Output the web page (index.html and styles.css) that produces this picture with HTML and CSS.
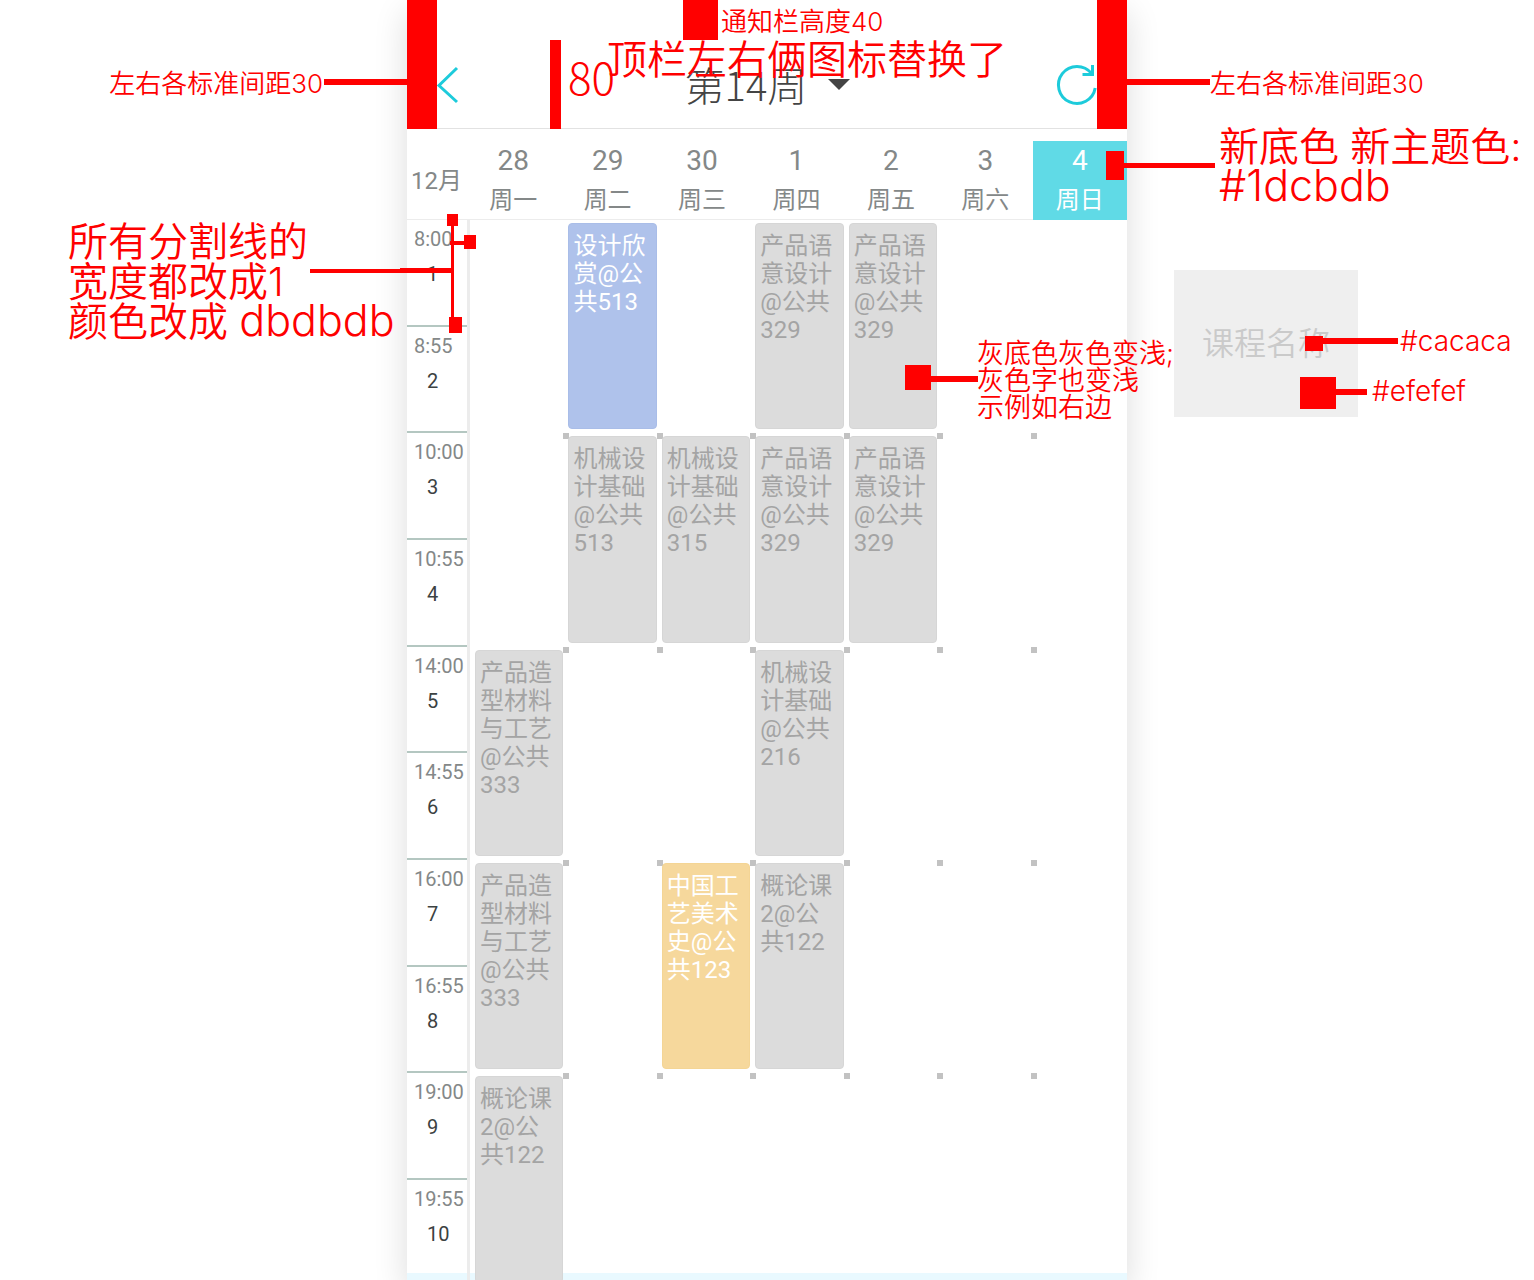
FILE: index.html
```html
<!DOCTYPE html>
<html lang="zh-CN">
<head>
<meta charset="utf-8">
<meta name="viewport" content="width=device-width, initial-scale=1">
<title>课程表</title>
<link rel="stylesheet" href="styles.css">
</head>
<body>
<main class="phone">
  <header class="topbar">
    <button class="icon-button" type="button" aria-label="返回">
      <svg width="22" height="38" viewBox="0 0 22 38"><path d="M20 2 2 19.500 20 36"/></svg>
    </button>
    <div class="week">
      <select class="week-select" aria-label="选择周次"><option>第14周</option></select>
      <svg class="week-arrow" width="22" height="11" viewBox="0 0 22 11"><path d="M0 0h22L11 11z"/></svg>
    </div>
    <button class="icon-button" type="button" aria-label="刷新">
      <svg width="40" height="42" viewBox="0 0 40 42"><path d="M38.200 24A18.500 18.500 0 1 1 34.500 9.500M35.500 1v9.500H25.500"/></svg>
    </button>
  </header>

  <div class="days">
    <div class="month">12月</div>
    <div class="day"><span class="date">28</span><span>周一</span></div>
    <div class="day"><span class="date">29</span><span>周二</span></div>
    <div class="day"><span class="date">30</span><span>周三</span></div>
    <div class="day"><span class="date">1</span><span>周四</span></div>
    <div class="day"><span class="date">2</span><span>周五</span></div>
    <div class="day"><span class="date">3</span><span>周六</span></div>
    <div class="day today"><span class="date">4</span><span>周日</span></div>
  </div>

  <div class="schedule">
    <ol class="periods">
      <li><time>8:00</time><b>1</b></li>
      <li><time>8:55</time><b>2</b></li>
      <li><time>10:00</time><b>3</b></li>
      <li><time>10:55</time><b>4</b></li>
      <li><time>14:00</time><b>5</b></li>
      <li><time>14:55</time><b>6</b></li>
      <li><time>16:00</time><b>7</b></li>
      <li><time>16:55</time><b>8</b></li>
      <li><time>19:00</time><b>9</b></li>
      <li><time>19:55</time><b>10</b></li>
      <li></li>
      <li></li>
    </ol>
    <div class="board">
      <div class="grid marks" aria-hidden="true">
        <i></i><i></i><i></i><i></i><i></i><i></i><i></i>
        <i></i><i></i><i></i><i></i><i></i><i></i><i></i>
        <i></i><i></i><i></i><i></i><i></i><i></i><i></i>
        <i></i><i></i><i></i><i></i><i></i><i></i><i></i>
      </div>
      <div class="grid courses">
        <div class="course blue tue row1">设计欣<br>赏@公<br>共513</div>
        <div class="course thu row1">产品语<br>意设计<br>@公共<br>329</div>
        <div class="course fri row1">产品语<br>意设计<br>@公共<br>329</div>
        <div class="course tue row2">机械设<br>计基础<br>@公共<br>513</div>
        <div class="course wed row2">机械设<br>计基础<br>@公共<br>315</div>
        <div class="course thu row2">产品语<br>意设计<br>@公共<br>329</div>
        <div class="course fri row2">产品语<br>意设计<br>@公共<br>329</div>
        <div class="course mon row3">产品造<br>型材料<br>与工艺<br>@公共<br>333</div>
        <div class="course thu row3">机械设<br>计基础<br>@公共<br>216</div>
        <div class="course mon row4">产品造<br>型材料<br>与工艺<br>@公共<br>333</div>
        <div class="course amber wed row4">中国工<br>艺美术<br>史@公<br>共123</div>
        <div class="course thu row4">概论课<br>2@公<br>共122</div>
        <div class="course mon row5">概论课<br>2@公<br>共122</div>
      </div>
    </div>
  </div>

  <div class="sample">课程名称</div>

  <svg class="guides" width="720" height="1280" viewBox="0 0 720 1280" aria-hidden="true">
    <!-- side margins, status bar and title bar heights -->
    <path d="M0 0h30v129H0zM690 0h30v129h-30zM276 0h35v40h-35zM143 40h11v89h-11z"/>
    <path d="M-83 79H0v6h-83zM720 79h83v6h-83z"/>
    <!-- divider lines -->
    <path d="M-97 269h142v4H-97zM-7 268h52v4H-7zM44 214h3v119h-3zM40 214h11v12H40zM42 317h13v16H42zM43 241h20v4H43zM57 235h12v14H57z"/>
    <!-- theme colour -->
    <path d="M699 151h18v29h-18zM717 163h91v5h-91z"/>
    <!-- course greys -->
    <path d="M498 365h26v25h-26zM524 376h47v6h-47zM898 336h18v15h-18zM916 338h75v6h-75zM893 377h36v32h-36zM929 389h31v6h-31z"/>
  </svg>
  <p class="note small note-status">通知栏高度40</p>
  <p class="note large note-icons">顶栏左右俩图标替换了</p>
  <p class="note note-height">80</p>
  <p class="note small note-left">左右各标准间距30</p>
  <p class="note small note-right">左右各标准间距30</p>
  <p class="note large note-theme">新底色 新主题色:<br><span class="hex">#1dcbdb</span></p>
  <p class="note large note-divider">所有分割线的<br>宽度都改成1<br>颜色改成 <span class="hex">dbdbdb</span></p>
  <p class="note medium note-grey">灰底色灰色变浅;<br>灰色字也变浅<br>示例如右边</p>
  <p class="note code note-text-hex">#cacaca</p>
  <p class="note code note-fill-hex">#efefef</p>
</main>
</body>
</html>
```
FILE: styles.css
```css
* { box-sizing: border-box; }

body {
  margin: 0;
  background: #fff;
  color: #848888;
  font-family: Roboto, "Noto Sans CJK SC", sans-serif;
  overflow: hidden;
}

.phone {
  position: relative;
  display: flex;
  flex-direction: column;
  width: 100%;
  max-width: 720px;
  height: 100vh;
  margin: 0 auto;
  background: #fff linear-gradient(#e9f9ff, #e9f9ff) bottom / 100% 7px no-repeat;
  box-shadow: 0 12px 32px rgba(0, 0, 0, 0.14);
}

/* Title bar; the top padding is the status bar */
.topbar {
  flex: none;
  display: flex;
  align-items: center;
  justify-content: space-between;
  padding: 40px 30px 0;
  height: 129px;
  border-bottom: 1px solid #e2e2e2;
}

.icon-button {
  display: flex;
  width: 40px;
  padding: 2px 0 0;
  border: 0;
  background: none;
}

.icon-button svg {
  overflow: visible;
  fill: none;
  stroke: #1dcbdb;
  stroke-width: 3;
}

.week {
  display: flex;
  align-items: center;
  gap: 20px;
}

.week-select {
  appearance: none;
  padding: 0;
  border: 0;
  background: none;
  color: #444;
  font: 300 40px/60px "Noto Sans CJK SC", sans-serif;
}

.week-arrow { fill: #444; }

/* Day header */
.days {
  flex: none;
  display: grid;
  grid-template-columns: 59px repeat(7, 1fr);
  padding-top: 12px;
  border-bottom: 1px solid #ececec;
  font-size: 24px;
}

.month {
  padding-top: 25px;
  line-height: 30px;
  text-align: center;
}

.day {
  display: flex;
  flex-direction: column;
  align-items: center;
  line-height: 38px;
  height: 78px;
}

.date {
  font-size: 28px;
  line-height: 40px;
}

.today {
  height: 79px;
  margin-bottom: -1px;
  background: #60dae6;
  color: #fff;
}

/* Timetable */
.schedule {
  flex: 1;
  min-height: 0;
  display: flex;
  align-items: flex-start;
  overflow: hidden;
}

.periods {
  display: grid;
  grid-template-rows: repeat(12, 1fr);
  flex: none;
  width: 63px;
  height: 1280px;
  margin: 0;
  padding: 0;
  border-right: 3px solid #ececec;
  list-style: none;
  font-size: 20px;
  line-height: 24px;
}

.periods li {
  padding: 7px 0 0 7px;
  border-bottom: 2px solid #b4c7c1;
}

.periods time { display: block; }

.periods b {
  display: block;
  margin-top: 11px;
  padding-left: 13px;
  color: #3c4242;
  font-weight: 400;
}

.board {
  flex: 1;
  display: grid;
  padding: 3px 0 0 3px;
}

.grid {
  grid-area: 1 / 1;
  display: grid;
  grid-template-columns: repeat(7, 1fr);
  grid-template-rows: repeat(6, 1fr);
  height: 1280px;
}

/* Small squares on the corners where cells meet */
.marks i {
  align-self: end;
  justify-self: end;
  width: 6px;
  height: 6px;
  margin: 0 -3px -3px 0;
  background: #c2c2c2;
}

.marks i:nth-child(7n) { visibility: hidden; }

.course {
  margin: 0 3px 7px 2px;
  padding: 8px 0 0 4px;
  border: 1px solid #d6d6d6;
  border-radius: 4px;
  background: #dcdcdc;
  color: #a4a4a4;
  font-size: 24px;
  line-height: 28px;
  white-space: nowrap;
}

.blue { background: #afc2eb; border-color: #a9bde8; color: #fff; }
.amber { background: #f6d89c; border-color: #f4d595; color: #fff; }

.mon { grid-column: 1; }
.tue { grid-column: 2; }
.wed { grid-column: 3; }
.thu { grid-column: 4; }
.fri { grid-column: 5; }
.row1 { grid-row: 1; }
.row2 { grid-row: 2; }
.row3 { grid-row: 3; }
.row4 { grid-row: 4; }
.row5 { grid-row: 5; }

/* Design notes laid over the screen */
.guides {
  position: absolute;
  top: 0;
  left: 0;
  overflow: visible;
  fill: #f00;
}

.sample {
  position: absolute;
  top: 270px;
  left: 767px;
  width: 184px;
  height: 147px;
  background: #efefef;
  color: #cacaca;
  font: 350 32px/143px "Noto Sans CJK SC", sans-serif;
  text-align: center;
}

.note {
  position: absolute;
  margin: 0;
  color: #f00;
  font-family: Inter, "Noto Sans CJK SC", sans-serif;
  font-weight: 350;
  white-space: nowrap;
}

.small { font-size: 26px; line-height: 26px; }
.medium { font-size: 27px; line-height: 27px; }
.code { font-size: 28px; line-height: 27px; }
.large { font-size: 40px; line-height: 40px; }
.hex { font-size: 43px; line-height: 1px; }

.note-status { top: 9px; left: 314px; }
.note-icons { top: 40px; left: 200px; }
.note-height { top: 54px; left: 161px; font: 300 44px/44px "Noto Sans CJK SC", sans-serif; }
.note-left { top: 71px; right: 804px; }
.note-right { top: 71px; left: 803px; }
.note-theme { top: 127px; left: 812px; }
.note-divider { top: 222px; left: -339px; }
.note-grey { top: 340px; left: 570px; }
.note-text-hex { top: 328px; left: 993px; }
.note-fill-hex { top: 378px; left: 965px; }
```
